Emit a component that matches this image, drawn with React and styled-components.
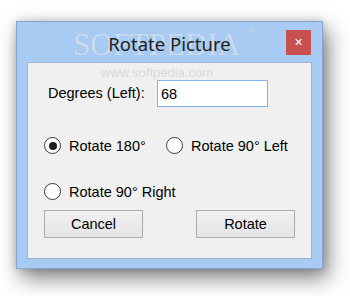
import React from 'react';
import styled, { createGlobalStyle } from 'styled-components';

const GlobalStyle = createGlobalStyle`
  html, body {
    margin: 0;
    padding: 0;
    background: #ffffff;
  }
`;

const Page = styled.div`
  width: 350px;
  height: 296px;
  padding: 21px 0 0 16px;
  box-sizing: border-box;
  overflow: hidden;
`;

const Window = styled.div`
  position: relative;
  width: 307px;
  height: 248px;
  box-sizing: border-box;
  background: #a7cbf2;
  border: 1px solid #85a6cf;
  padding: 0 10px 9px 10px;
  display: flex;
  flex-direction: column;
  box-shadow: 5px 9px 20px rgba(0, 0, 0, 0.5), 0 0 8px rgba(0, 0, 0, 0.18);
`;

const TitleBar = styled.div`
  height: 40px;
  display: grid;
  grid-template-columns: 1fr auto 1fr;
  align-items: center;
`;

const Title = styled.div`
  grid-column: 2;
  font-family: "Noto Sans", "Open Sans", sans-serif;
  font-size: 18.5px;
  color: #1e1e1e;
  padding-top: 3px;
  position: relative;
  z-index: 1;
`;

const CloseButton = styled.div`
  grid-column: 3;
  justify-self: end;
  margin-right: 1px;
  width: 25px;
  height: 25px;
  background: #c75050;
  display: flex;
  align-items: center;
  justify-content: center;
  color: #ffffff;
  font-family: "DejaVu Sans", sans-serif;
  font-weight: bold;
  font-size: 11px;
`;

const Watermark = styled.div`
  position: absolute;
  left: 56px;
  top: 5px;
  font-family: "Liberation Serif", serif;
  font-size: 31px;
  color: rgba(255, 255, 255, 0.5);
  text-shadow: 0 0 1px rgba(120, 140, 170, 0.3);
  pointer-events: none;
`;

const Trademark = styled.span`
  font-family: "Liberation Sans", sans-serif;
  font-size: 9px;
  vertical-align: top;
  margin-left: 6px;
`;

const WatermarkUrl = styled.div`
  position: absolute;
  left: 84px;
  top: 43px;
  font-family: "Liberation Sans Narrow", "Liberation Sans", sans-serif;
  font-size: 13px;
  color: rgba(200, 200, 200, 0.6);
  pointer-events: none;
  z-index: 1;
`;

const Client = styled.div`
  flex: 1;
  background: #f0f0f0;
  border: 1px solid #9db4cd;
  padding: 17px 0 0 16px;
  display: flex;
  flex-direction: column;
  font-family: "Liberation Sans", Arial, sans-serif;
  font-size: 14.5px;
  color: #000000;
`;

const FieldRow = styled.div`
  display: flex;
  align-items: center;
`;

const Label = styled.label`
  width: 109px;
  margin-left: 4px;
  padding-bottom: 1px;
`;

const TextBox = styled.div`
  width: 111px;
  height: 27px;
  box-sizing: border-box;
  background: #ffffff;
  border: 1px solid #7eb4ea;
  padding: 0 3px;
  display: flex;
  align-items: center;
`;

const RadioRow = styled.div`
  display: flex;
  align-items: center;
  margin-top: ${p => p.$top}px;
`;

const RadioItem = styled.div`
  display: flex;
  align-items: center;
  gap: 8px;
  width: ${p => (p.$width ? `${p.$width}px` : 'auto')};
`;

const RadioCircle = styled.span`
  width: 17px;
  height: 17px;
  box-sizing: border-box;
  border-radius: 50%;
  border: 1px solid #3c3c3c;
  background: #ffffff;
  display: flex;
  align-items: center;
  justify-content: center;

  &::after {
    content: '';
    width: 8px;
    height: 8px;
    border-radius: 50%;
    background: #1c1c1c;
    display: ${p => (p.$checked ? 'block' : 'none')};
  }
`;

const ButtonRow = styled.div`
  display: flex;
  gap: 53px;
  margin-top: 10px;
`;

const Button = styled.div`
  width: 99px;
  height: 28px;
  box-sizing: border-box;
  border: 1px solid #acacac;
  background: linear-gradient(#f0f0f0, #e5e5e5);
  display: flex;
  align-items: center;
  justify-content: center;
`;

function Radio({ checked, label, width }) {
  return (
    <RadioItem $width={width}>
      <RadioCircle $checked={checked} />
      <span>{label}</span>
    </RadioItem>
  );
}

export default function App() {
  return (
    <Page>
      <GlobalStyle />
      <Window>
        <Watermark>
          SOFTPEDIA<Trademark>™</Trademark>
        </Watermark>
        <WatermarkUrl>www.softpedia.com</WatermarkUrl>
        <TitleBar>
          <Title>Rotate Picture</Title>
          <CloseButton>✕</CloseButton>
        </TitleBar>
        <Client>
          <FieldRow>
            <Label>Degrees (Left):</Label>
            <TextBox>68</TextBox>
          </FieldRow>
          <RadioRow $top={30}>
            <Radio checked label="Rotate 180°" width={122} />
            <Radio label="Rotate 90° Left" />
          </RadioRow>
          <RadioRow $top={29}>
            <Radio label="Rotate 90° Right" />
          </RadioRow>
          <ButtonRow>
            <Button>Cancel</Button>
            <Button>Rotate</Button>
          </ButtonRow>
        </Client>
      </Window>
    </Page>
  );
}
